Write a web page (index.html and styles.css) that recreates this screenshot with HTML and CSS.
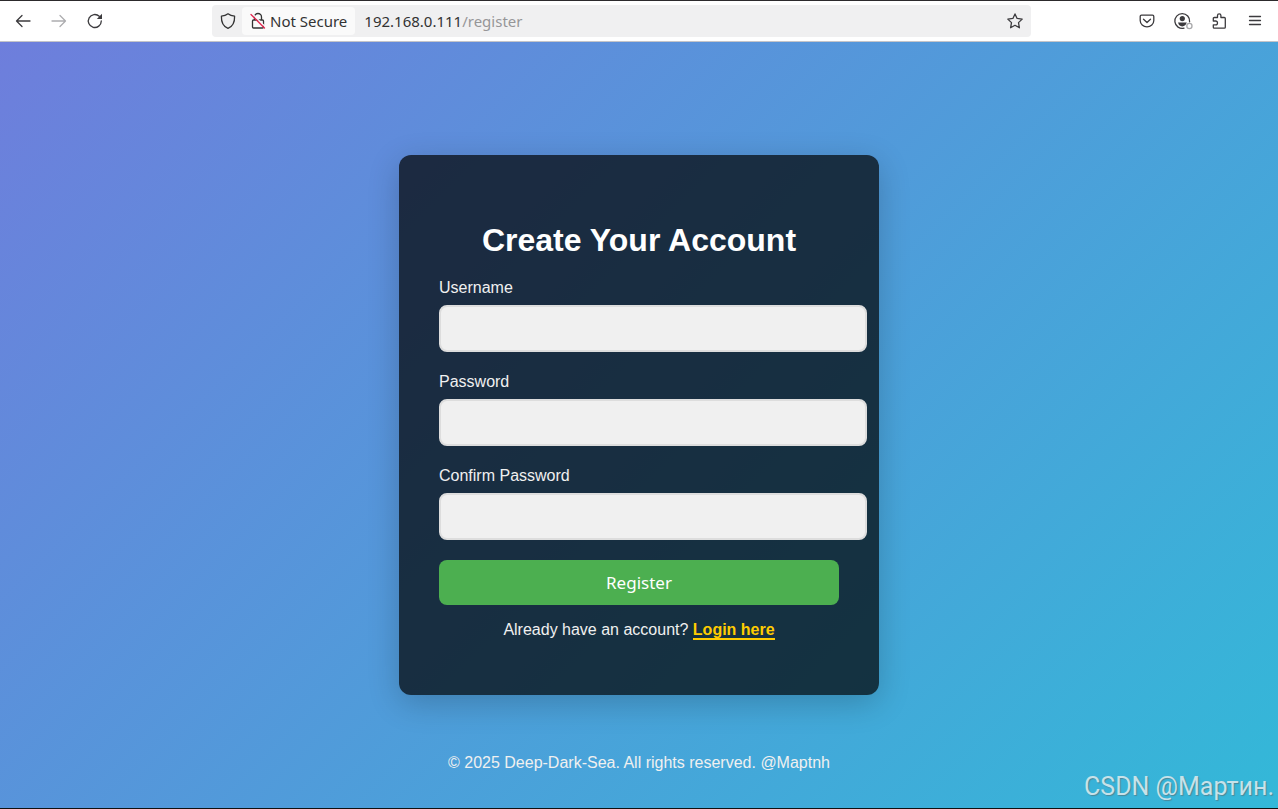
FILE: index.html
```html
<!DOCTYPE html>
<html lang="en">

<head>
    <meta charset="UTF-8">
    <meta name="viewport" content="width=device-width, initial-scale=1.0">
    <title>Register</title>
    <link rel="stylesheet" href="styles.css">
</head>

<body>

    <!-- Browser toolbar -->
    <header class="toolbar">
        <div class="nav-buttons">
            <button type="button" class="icon-btn" aria-label="Back">
                <svg class="icon" viewBox="0 0 16 16"><path d="M15 8H1.5M7 2.5L1.5 8L7 13.5"/></svg>
            </button>
            <button type="button" class="icon-btn disabled" aria-label="Forward" disabled>
                <svg class="icon" viewBox="0 0 16 16"><path d="M1 8h13.5M9 2.5L14.5 8L9 13.5"/></svg>
            </button>
            <button type="button" class="icon-btn" aria-label="Reload">
                <svg class="icon" viewBox="0 0 16 16"><path d="M14.3 8A6.5 6.5 0 1 1 12.3 3.3"/><path class="solid" d="M15 .8V6H9.8Z"/></svg>
            </button>
        </div>

        <div class="url-bar">
            <svg class="icon shield" viewBox="0 0 16 16"><path d="M8 .8C6 2.4 3.8 3 1.4 3.2C1.2 9 3.5 13.5 8 15.3C12.5 13.5 14.8 9 14.6 3.2C12.2 3 10 2.4 8 .8Z"/></svg>
            <button type="button" class="security">
                <svg class="icon" viewBox="0 0 16 16"><path d="M4.5 7V4a3.5 3.5 0 0 1 7 0v3M3.5 7h9a1 1 0 0 1 1 1v6a1 1 0 0 1-1 1h-9a1 1 0 0 1-1-1V8a1 1 0 0 1 1-1Z"/><path class="slash-gap" d="M2.500 1L15.500 14"/><path class="slash" d="M1 1.5L14.5 15"/></svg>
                Not Secure
            </button>
            <span class="address">192.168.0.111<span class="path">/register</span></span>
            <button type="button" class="icon-btn star" aria-label="Bookmark">
                <svg class="icon" viewBox="0 0 16 16"><path d="M8 .9L10.1 5.4L15.2 6.1L11.5 9.6L12.4 14.8L8 12.3L3.6 14.8L4.5 9.6L.8 6.1L5.9 5.4Z"/></svg>
            </button>
        </div>

        <div class="tool-buttons">
            <button type="button" class="icon-btn" aria-label="Pocket">
                <svg class="icon" viewBox="0 0 16 16"><path d="M2.5 2.2h11a1.3 1.3 0 0 1 1.3 1.3v4a6.8 6.3 0 0 1-13.6 0v-4a1.3 1.3 0 0 1 1.3-1.3Z"/><path d="M4.5 6.3L8 9.5L11.5 6.3"/></svg>
            </button>
            <button type="button" class="icon-btn" aria-label="Account">
                <svg class="icon wide" viewBox="0 0 18 16"><path d="M15.6 8.8A7.400 7.400 0 1 0 10 15.200"/><circle class="solid" cx="8.300" cy="5.600" r="2.600"/><path class="solid" d="M4 9.500h8.800L11.500 12a5 5 0 0 1-6.500 0Z"/><circle class="badge" cx="15.400" cy="13" r="2.600"/></svg>
            </button>
            <button type="button" class="icon-btn" aria-label="Extensions">
                <svg class="icon" viewBox="0 0 16 16"><path d="M2.300 8V5.500a1 1 0 0 1 1-1H6.500V2.600a1.700 1.700 0 0 1 3.400 0v1.900h3.400a1 1 0 0 1 1 1v8.700a1 1 0 0 1-1 1h-10a1 1 0 0 1-1-1v-2.400h2.300a1.900 1.900 0 0 0 0-3.800Z"/></svg>
            </button>
            <button type="button" class="icon-btn" aria-label="Menu">
                <svg class="icon" viewBox="0 0 16 16"><path d="M2.500 3.500h11M2.500 7.500h11M2.500 11.500h11"/></svg>
            </button>
        </div>
    </header>

    <div class="page">
        <main class="container">
            <h1>Create Your Account</h1>
            <form method="post">
                <label for="username">Username</label>
                <input type="text" id="username" name="username" required>

                <label for="password">Password</label>
                <input type="password" id="password" name="password" required>

                <label for="confirm_password">Confirm Password</label>
                <input type="password" id="confirm_password" name="confirm_password" required>

                <button type="submit" class="register-btn">Register</button>
            </form>
            <p class="login">Already have an account? <a href="/login">Login here</a></p>
        </main>

        <footer>© 2025 Deep-Dark-Sea. All rights reserved. @Maptnh</footer>
        <div class="watermark">CSDN @Мартин.</div>
    </div>

</body>

</html>
```
FILE: styles.css
```css
* {
    box-sizing: border-box;
}

body {
    font-family: 'Liberation Sans', Arial, sans-serif;
    font-size: 16px;
    margin: 0;
    min-height: 100vh;
    display: flex;
    flex-direction: column;
}

button {
    border: none;
    cursor: pointer;
}

/* Toolbar */
.toolbar {
    display: grid;
    grid-template-columns: 207px 1fr 242px;
    align-items: center;
    height: 42px;
    padding: 0 5px;
    background-color: #ffffff;
    border-top: 1px solid #2c2a2c;
    border-bottom: 1px solid #c4c4c8;
    font-family: 'Noto Sans', sans-serif;
    font-size: 15px;
    color: #333333;
}

.nav-buttons,
.tool-buttons {
    display: flex;
}

.tool-buttons {
    justify-content: flex-end;
}

.icon-btn {
    display: flex;
    align-items: center;
    justify-content: center;
    width: 36px;
    height: 32px;
    padding: 0;
    background: none;
    color: #3c3b3e;
}

.disabled {
    color: #adadb0;
}

.icon {
    width: 16px;
    height: 16px;
    flex: none;
    overflow: visible;
    fill: none;
    stroke: currentColor;
    stroke-width: 1.3;
    stroke-linejoin: round;
    stroke-linecap: round;
}

.wide {
    width: 18px;
}

.solid {
    fill: currentColor;
    stroke: none;
}

.badge {
    stroke: #a8a8aa;
}

.slash-gap {
    stroke: #fafafa;
}

.slash {
    stroke: #e22850;
}

.url-bar {
    display: flex;
    align-items: center;
    height: 32px;
    padding-left: 8px;
    background-color: #f0f0f1;
    border-radius: 4px;
}

.security {
    display: flex;
    align-items: center;
    gap: 4px;
    height: 28px;
    margin: 0 9px 0 6px;
    padding: 0 8px;
    border-radius: 4px;
    background-color: #fafafa;
    font: inherit;
    color: #333333;
}

.address {
    flex: 1;
}

.path {
    color: #969698;
}

.star {
    width: 32px;
}

/* Page */
.page {
    flex: 1;
    position: relative;
    display: grid;
    grid-template-rows: 1fr auto 1fr;
    justify-items: center;
    background: linear-gradient(135deg, #6e7edc, #33b8d8);
    border-bottom: 1px solid #111111;
    color: #ffffff;
}

.container {
    grid-row: 2;
    width: 100%;
    max-width: 480px;
    padding: 65px 40px 55px;
    background-color: rgba(0, 0, 0, 0.7);
    border-radius: 12px;
    box-shadow: 0 8px 32px rgba(0, 0, 0, 0.2);
}

h1 {
    margin: 0 0 18px;
    font-size: 32px;
    line-height: 40px;
    text-align: center;
}

label {
    display: block;
    margin-bottom: 7px;
    line-height: 20px;
    color: #f0f0f0;
}

/* fields run wider than the form by their padding and border */
input {
    box-sizing: content-box;
    display: block;
    width: 100%;
    height: 19px;
    margin-bottom: 20px;
    padding: 12px;
    border: 2px solid #dddddd;
    border-radius: 8px;
    background-color: #f0f0f0;
    font-size: 16px;
    outline: none;
}

.register-btn {
    display: block;
    width: 100%;
    height: 45px;
    border-radius: 8px;
    background-color: #4caf50;
    color: #ffffff;
    font-family: 'Noto Sans', sans-serif;
    font-size: 17px;
}

.login {
    margin: 15px 0 0;
    line-height: 20px;
    text-align: center;
    color: #f0f0f0;
}

.login a {
    color: #ffcc00;
    font-weight: bold;
    text-decoration: none;
    border-bottom: 2px solid #ffcc00;
}

footer {
    grid-row: 3;
    align-self: end;
    margin-bottom: 35px;
    line-height: 20px;
    color: #f0f0f0;
}

.watermark {
    position: absolute;
    right: 4px;
    bottom: 4px;
    font-family: Roboto, sans-serif;
    font-size: 25px;
    line-height: 34px;
    color: #c6e2ea;
    text-shadow: 1px 1px 1px #4c8798;
}
```
